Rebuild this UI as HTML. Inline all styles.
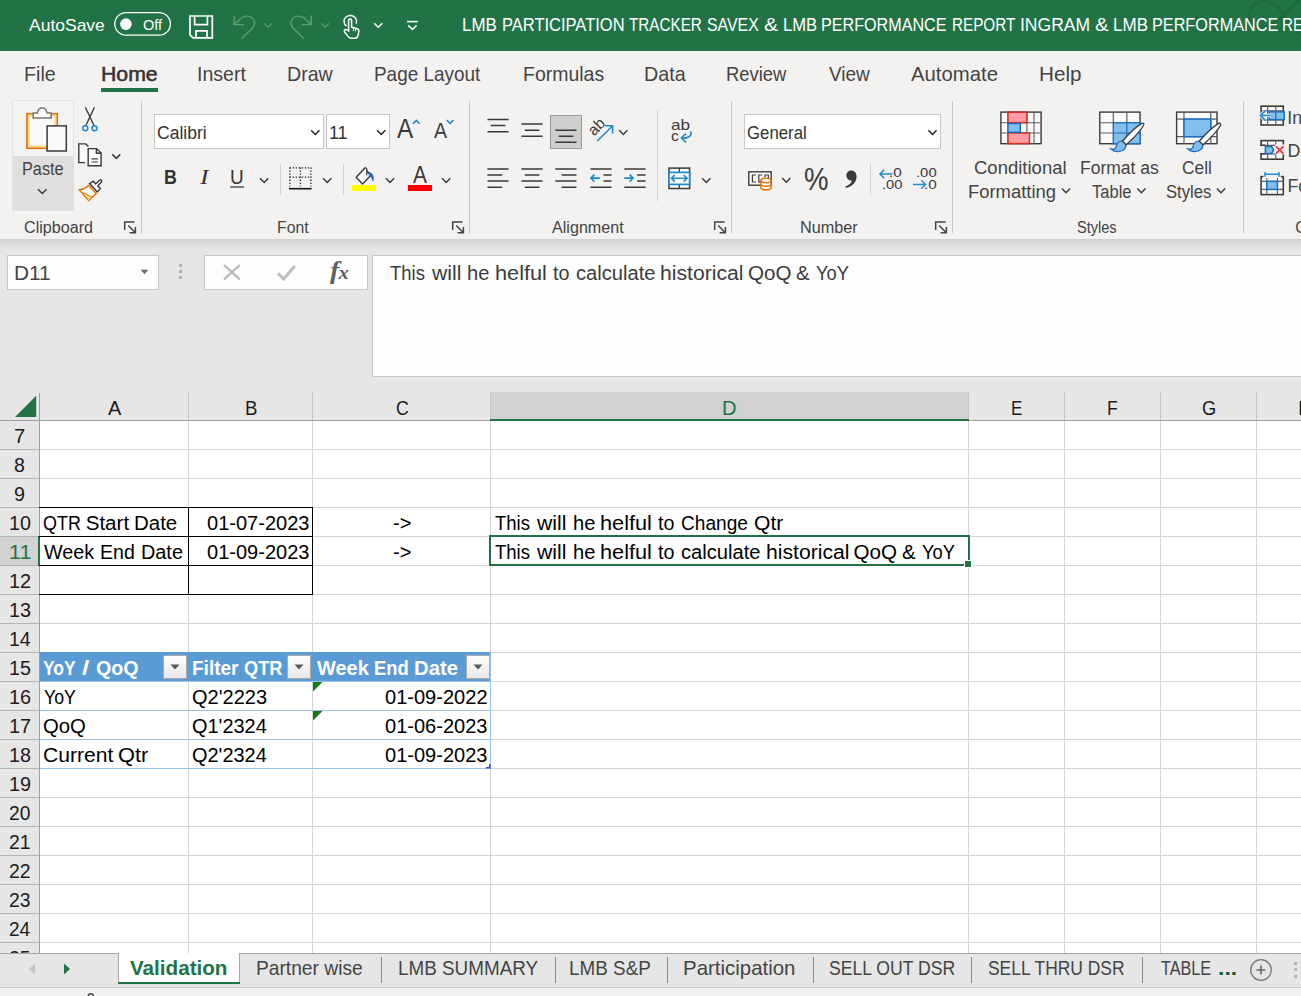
<!DOCTYPE html>
<html lang="en"><head><meta charset="utf-8"><title>Excel</title>
<style>
html,body{margin:0;padding:0;}
body{width:1301px;height:996px;overflow:hidden;position:relative;background:#fff;
font-family:"Liberation Sans",sans-serif;}
.r{position:absolute;box-sizing:border-box;display:block;}
.t{position:absolute;white-space:nowrap;transform-origin:0 0;display:block;}
#app{position:absolute;left:0;top:0;width:1301px;height:996px;overflow:hidden;}
</style></head><body><div id="app">
<div class="r " style="left:0px;top:0px;width:1301px;height:51px;background:#217346;"></div>
<div class="r " style="left:0px;top:51px;width:1301px;height:188px;background:#f3f2f1;"></div>
<div class="r " style="left:0px;top:239px;width:1301px;height:154px;background:#e6e6e6;"></div>
<div class="r " style="left:0px;top:239px;width:1301px;height:10px;background:linear-gradient(#d0d0d0,#dcdcdc 40%,#e6e6e6);"></div>
<svg class="r" style="left:1240px;top:0px;" width="61" height="51" viewBox="1240 0 61 51"><path d="M1301 -3 C1291 8 1283 16 1275.500 21.5 C1267 27.5 1255 28.500 1250 21 C1245.500 13.500 1252 2.500 1263 1.200 C1273 0.200 1279 7 1283.500 15 C1288 23.500 1294 31 1302 35.500" fill="none" stroke="#1d6a40" stroke-width="2.2"/></svg>
<span class="t" style="left:29.41px;top:13px;font-size:17.39px;line-height:24px;color:#fff;transform:scaleX(1.0065);">AutoSave</span>
<span class="t" style="left:142.65px;top:15px;font-size:14.49px;line-height:20px;color:#fff;transform:scaleX(1.0014);">Off</span>
<span class="t" style="left:462.40px;top:13px;font-size:17.83px;line-height:25px;color:#fff;transform:scaleX(0.9469);">LMB</span>
<span class="t" style="left:501.98px;top:13px;font-size:17.83px;line-height:25px;color:#fff;transform:scaleX(0.9256);">PARTICIPATION</span>
<span class="t" style="left:629.09px;top:13px;font-size:17.83px;line-height:25px;color:#fff;transform:scaleX(0.8556);">TRACKER</span>
<span class="t" style="left:706.79px;top:13px;font-size:17.83px;line-height:25px;color:#fff;transform:scaleX(0.8909);">SAVEX</span>
<span class="t" style="left:764.26px;top:13px;font-size:17.83px;line-height:25px;color:#fff;transform:scaleX(1.1855);">&amp;</span>
<span class="t" style="left:782.92px;top:13px;font-size:17.83px;line-height:25px;color:#fff;transform:scaleX(0.9323);">LMB</span>
<span class="t" style="left:821.21px;top:13px;font-size:17.83px;line-height:25px;color:#fff;transform:scaleX(0.9048);">PERFORMANCE</span>
<span class="t" style="left:951.68px;top:13px;font-size:17.83px;line-height:25px;color:#fff;transform:scaleX(0.8558);">REPORT</span>
<span class="t" style="left:1019.52px;top:13px;font-size:17.83px;line-height:25px;color:#fff;transform:scaleX(0.9824);">INGRAM</span>
<span class="t" style="left:1094.79px;top:13px;font-size:17.83px;line-height:25px;color:#fff;transform:scaleX(1.1399);">&amp;</span>
<span class="t" style="left:1112.64px;top:13px;font-size:17.83px;line-height:25px;color:#fff;transform:scaleX(0.9542);">LMB</span>
<span class="t" style="left:1151.70px;top:13px;font-size:17.83px;line-height:25px;color:#fff;transform:scaleX(0.9103);">PERFORMANCE</span>
<span class="t" style="left:1282.28px;top:13px;font-size:17.83px;line-height:25px;color:#fff;transform:scaleX(0.8558);">REPORT</span>
<svg class="r" style="left:0px;top:0px;" width="1301" height="51" viewBox="0 0 1301 51"><rect x="114.8" y="12.6" width="55.6" height="22.6" rx="11.3" fill="none" stroke="#fff" stroke-width="1.3"/><circle cx="125.9" cy="24.1" r="5.8" fill="#fff"/><path d="M190 16 H212.3 V37.8 H193 L190 34.8 Z M194.6 16 V24.6 H207.4 V16 M196 37.8 V30.8 H207 V37.8" fill="none" stroke="#fff" stroke-width="1.7" /><path d="M234.2 15.5 V24.6 H244 M234.6 24.2 L241.5 18 C244.5 15.5 250 15.3 252.8 18.6 C255.6 22 254.5 26 251.5 29 L241.8 38.6" fill="none" stroke="#5f9c79" stroke-width="1.4" /><path d="M311.3 15.5 V24.6 H301.5 M310.9 24.2 L304 18 C301 15.5 295.5 15.3 292.7 18.6 C289.9 22 291 26 294 29 L303.7 38.6" fill="none" stroke="#5f9c79" stroke-width="1.4" /><path d="M264.4 23.4 L268.2 27.2 L272 23.4" fill="none" stroke="#5f9c79" stroke-width="1.3" /><path d="M321.4 23.4 L325.2 27.2 L329 23.4" fill="none" stroke="#5f9c79" stroke-width="1.3" /><path d="M346.6 26.2 C343.6 24 343 19.6 346 17 C349 14.6 353.6 15.2 355.6 18.2 C356.6 19.8 356.8 21.6 356.2 23.4" fill="none" stroke="#fff" stroke-width="1.5" /><path d="M348.6 31 V20.6 C348.6 18.6 351.6 18.6 351.6 20.6 V27.2 L356.6 28.4 C358.4 28.8 359 30 358.8 31.6 L358 35.6 C357.6 37.4 356.4 38.2 354.8 38.2 H351.4 C350 38.2 349 37.6 348.2 36.6 L344.6 32 C343.4 30.4 345.4 28.6 347 30 Z" fill="none" stroke="#fff" stroke-width="1.5" /><path d="M353.4 28 V31 M355.6 28.6 V31.4" fill="none" stroke="#fff" stroke-width="1" /><path d="M374.3 23.2 L378.3 27.2 L382.3 23.2" fill="none" stroke="#fff" stroke-width="1.5" /><path d="M407 21.6 H417.8" fill="none" stroke="#fff" stroke-width="1.5" /><path d="M408.2 25.4 L412.4 29.4 L416.6 25.4" fill="none" stroke="#fff" stroke-width="1.5" /></svg>
<span class="t" style="left:24.17px;top:60px;font-size:20.14px;line-height:28px;color:#444444;transform:scaleX(0.9780);">File</span>
<span class="t" style="left:100.60px;top:60px;font-size:20.14px;line-height:28px;color:#333;transform:scaleX(1.0556);-webkit-text-stroke:0.55px #333;">Home</span>
<span class="t" style="left:196.99px;top:60px;font-size:20.14px;line-height:28px;color:#444444;transform:scaleX(0.9703);">Insert</span>
<span class="t" style="left:287.18px;top:60px;font-size:20.14px;line-height:28px;color:#444444;transform:scaleX(0.9743);">Draw</span>
<span class="t" style="left:374.23px;top:60px;font-size:20.14px;line-height:28px;color:#444444;transform:scaleX(0.9405);">Page Layout</span>
<span class="t" style="left:523.44px;top:60px;font-size:20.14px;line-height:28px;color:#444444;transform:scaleX(0.9673);">Formulas</span>
<span class="t" style="left:644.17px;top:60px;font-size:20.14px;line-height:28px;color:#444444;transform:scaleX(0.9784);">Data</span>
<span class="t" style="left:725.52px;top:60px;font-size:20.14px;line-height:28px;color:#444444;transform:scaleX(0.9155);">Review</span>
<span class="t" style="left:828.66px;top:60px;font-size:20.14px;line-height:28px;color:#444444;transform:scaleX(0.9433);">View</span>
<span class="t" style="left:911.40px;top:60px;font-size:20.14px;line-height:28px;color:#444444;transform:scaleX(1.0095);">Automate</span>
<span class="t" style="left:1038.85px;top:60px;font-size:20.14px;line-height:28px;color:#444444;transform:scaleX(1.0264);">Help</span>
<div class="r " style="left:101px;top:88px;width:57px;height:4px;background:#217346;"></div>
<div class="r " style="left:141px;top:101px;width:1px;height:132px;background:#c8c6c4;"></div>
<div class="r " style="left:469px;top:101px;width:1px;height:132px;background:#c8c6c4;"></div>
<div class="r " style="left:731px;top:101px;width:1px;height:132px;background:#c8c6c4;"></div>
<div class="r " style="left:952px;top:101px;width:1px;height:132px;background:#c8c6c4;"></div>
<div class="r " style="left:1243px;top:101px;width:1px;height:132px;background:#c8c6c4;"></div>
<div class="r " style="left:280px;top:164px;width:1px;height:31px;background:#d2d0ce;"></div>
<div class="r " style="left:343px;top:164px;width:1px;height:31px;background:#d2d0ce;"></div>
<div class="r " style="left:657px;top:110px;width:1px;height:91px;background:#d2d0ce;"></div>
<div class="r " style="left:870px;top:164px;width:1px;height:31px;background:#d2d0ce;"></div>
<div class="r " style="left:12px;top:100px;width:62px;height:111px;background:#f5f4f3;border:1px solid #e6e4e2;"></div>
<div class="r " style="left:12px;top:156px;width:62px;height:55px;background:#e1dfdd;"></div>
<span class="t" style="left:22.20px;top:157px;font-size:17.83px;line-height:25px;color:#444;transform:scaleX(0.9117);">Paste</span>
<span class="t" style="left:23.99px;top:217px;font-size:15.8px;line-height:22px;color:#444;transform:scaleX(1.0212);">Clipboard</span>
<span class="t" style="left:276.54px;top:217px;font-size:15.8px;line-height:22px;color:#444;transform:scaleX(0.9981);">Font</span>
<span class="t" style="left:552.42px;top:217px;font-size:15.8px;line-height:22px;color:#444;transform:scaleX(1.0204);">Alignment</span>
<span class="t" style="left:799.50px;top:217px;font-size:15.8px;line-height:22px;color:#444;transform:scaleX(1.0280);">Number</span>
<span class="t" style="left:1077.15px;top:217px;font-size:15.8px;line-height:22px;color:#444;transform:scaleX(0.9189);">Styles</span>
<span class="t" style="left:1295.21px;top:217px;font-size:15.8px;line-height:22px;color:#444;">Cells</span>
<div class="r " style="left:154px;top:114px;width:170px;height:35px;background:#fff;border:1px solid #c8c6c4;"></div>
<div class="r " style="left:326px;top:114px;width:64px;height:35px;background:#fff;border:1px solid #c8c6c4;"></div>
<div class="r " style="left:744px;top:114px;width:197px;height:35px;background:#fff;border:1px solid #c8c6c4;"></div>
<span class="t" style="left:156.82px;top:121px;font-size:17.83px;line-height:25px;color:#333;transform:scaleX(0.9833);">Calibri</span>
<span class="t" style="left:329.41px;top:121px;font-size:17.83px;line-height:25px;color:#333;transform:scaleX(1.0015);">11</span>
<span class="t" style="left:747.16px;top:121px;font-size:17.83px;line-height:25px;color:#333;transform:scaleX(0.9415);">General</span>
<span class="t" style="left:163.74px;top:163px;font-size:20.0px;line-height:28px;color:#333;font-weight:bold;transform:scaleX(0.8934);">B</span>
<span class="t" style="left:199.63px;top:163px;font-size:21.07px;line-height:29px;color:#333;font-style:italic;font-family:'Liberation Serif',serif;transform:scaleX(1.2277);">I</span>
<span class="t" style="left:230.48px;top:163px;font-size:20.0px;line-height:28px;color:#333;transform:scaleX(0.9474);">U</span>
<span class="t" style="left:974.47px;top:156px;font-size:17.83px;line-height:25px;color:#444;transform:scaleX(1.0379);">Conditional</span>
<span class="t" style="left:967.73px;top:180px;font-size:17.83px;line-height:25px;color:#444;transform:scaleX(1.0322);">Formatting</span>
<span class="t" style="left:1079.70px;top:156px;font-size:17.83px;line-height:25px;color:#444;transform:scaleX(0.9810);">Format as</span>
<span class="t" style="left:1091.87px;top:180px;font-size:17.83px;line-height:25px;color:#444;transform:scaleX(0.9263);">Table</span>
<span class="t" style="left:1182.13px;top:156px;font-size:17.83px;line-height:25px;color:#444;transform:scaleX(0.9714);">Cell</span>
<span class="t" style="left:1165.65px;top:180px;font-size:17.83px;line-height:25px;color:#444;transform:scaleX(0.9351);">Styles</span>
<span class="t" style="left:1287.30px;top:106px;font-size:17.83px;line-height:25px;color:#444;">Insert</span>
<span class="t" style="left:1287.47px;top:139px;font-size:17.83px;line-height:25px;color:#444;">Delete</span>
<span class="t" style="left:1287.47px;top:174px;font-size:17.83px;line-height:25px;color:#444;">Format</span>
<div class="r " style="left:550px;top:115px;width:32px;height:34px;background:#d0cecd;border:1px solid #9a9a9a;"></div>
<svg class="r" style="left:0px;top:98px;" width="141" height="120" viewBox="0 98 141 120"><rect x="27" y="113.8" width="30.2" height="34.4" fill="#fafafa" stroke="#e17000" stroke-width="1.7"/><rect x="28.9" y="115.7" width="26.4" height="30.6" fill="none" stroke="#f9d98c" stroke-width="1.9"/><path d="M33.2 118 V113 H37.4 C37.8 109.6 40 107.9 42.2 107.9 C44.4 107.9 46.6 109.6 47 113 H51.2 V118 Z" fill="#fafafa" stroke="#797775" stroke-width="1.5" /><rect x="47.1" y="125.9" width="19.2" height="25.1" fill="#fafafa" stroke="#3b3a39" stroke-width="1.5"/><path d="M38 189.2 L42.3 193.5 L46.6 189.2" fill="none" stroke="#3b3a39" stroke-width="1.5" /><path d="M85.4 107.4 L94.1 125.8 M94.4 107.4 L85.7 125.8" fill="none" stroke="#3b3a39" stroke-width="1.3" /><circle cx="85.3" cy="128.2" r="2.5" fill="none" stroke="#1e8bcd" stroke-width="1.5"/><circle cx="94.5" cy="128.2" r="2.5" fill="none" stroke="#1e8bcd" stroke-width="1.5"/><path d="M85 162.6 H78.8 V143.9 H85.8 L88.4 146.4" fill="#fafafa" stroke="#3b3a39" stroke-width="1.4" /><path d="M88.2 148.6 H96.6 L101.1 153.1 V165.8 H88.2 Z M96.4 148.8 V153.3 H100.9" fill="#fafafa" stroke="#3b3a39" stroke-width="1.4" /><path d="M91.6 158.9 H97.8 M91.6 162 H97.8" fill="none" stroke="#3b3a39" stroke-width="1.1" /><path d="M112.3 154.4 L116.3 158.4 L120.3 154.4" fill="none" stroke="#3b3a39" stroke-width="1.5" /><path d="M79.2 189.6 C83 189.2 86.4 187.6 88.6 185.4 L96.2 193.4 L88.6 200.6 Z" fill="#fff" stroke="#e17000" stroke-width="1.4" /><path d="M82 192.4 L92.4 197.2 L88.6 200.6 Z" fill="#fbdc9a" stroke="#e17000" stroke-width="1" /><path d="M89.6 183.6 L93.4 181.2 L95.6 184 L99.6 180.2 C100.8 179.2 102.4 180.8 101.4 182 L97.8 186 L100.4 188.4 L97.4 192 Z" fill="#fff" stroke="#3b3a39" stroke-width="1.4" /></svg>
<svg class="r" style="left:150px;top:108px;" width="330" height="100" viewBox="150 108 330 100"><path d="M311.2 130.20000000000002 L315.3 134.4 L319.40000000000003 130.20000000000002" fill="none" stroke="#222" stroke-width="1.5" /><path d="M377.09999999999997 130.20000000000002 L381.2 134.4 L385.3 130.20000000000002" fill="none" stroke="#222" stroke-width="1.5" /><path d="M412.9 123.8 L416.3 120.4 L419.7 123.8" fill="none" stroke="#1e8bcd" stroke-width="1.6" /><path d="M446.7 120 L450.1 123.4 L453.5 120" fill="none" stroke="#1e8bcd" stroke-width="1.6" /><path d="M260.09999999999997 178.20000000000002 L264.2 182.4 L268.3 178.20000000000002" fill="none" stroke="#3b3a39" stroke-width="1.5" /><path d="M323.09999999999997 178.20000000000002 L327.2 182.4 L331.3 178.20000000000002" fill="none" stroke="#3b3a39" stroke-width="1.5" /><path d="M385.9 178.20000000000002 L390 182.4 L394.1 178.20000000000002" fill="none" stroke="#3b3a39" stroke-width="1.5" /><path d="M442.09999999999997 178.20000000000002 L446.2 182.4 L450.3 178.20000000000002" fill="none" stroke="#3b3a39" stroke-width="1.5" /><path d="M230.3 187 H244" fill="none" stroke="#3b3a39" stroke-width="1.3" /><path d="M289.6 167.8 H311.2 M289.6 177.2 H311.2" fill="none" stroke="#222" stroke-width="1.3" stroke-dasharray="1.3 1.75"/><path d="M289.9 167.4 V186.6 M300.4 167.4 V186.6 M310.9 167.4 V186.6" fill="none" stroke="#222" stroke-width="1.3" stroke-dasharray="1.3 1.75"/><path d="M289 188.7 H311.6" fill="none" stroke="#111" stroke-width="1.6" /><path d="M364.2 168.8 L356.2 177.3 L362.6 183.9 L370.9 175.3 L366.8 171" fill="#f8f8f8" stroke="#3b3a39" stroke-width="1.4" /><path d="M363.9 169.6 C363.9 167.2 366.8 167.2 366.8 169.6 V175.2" fill="none" stroke="#3b3a39" stroke-width="1.3" /><path d="M369 172.2 C372.6 173 374.2 176.6 373 181.2 C372.2 178.4 371 176.6 369.2 175.4 Z" fill="#1e6fc0" stroke="#1565b0" stroke-width="0.6" /><rect x="352" y="185" width="24" height="6" fill="#ffff00"/><rect x="408" y="185" width="24" height="6" fill="#ff0000"/></svg>
<span class="t" style="left:397.48px;top:110px;font-size:27.54px;line-height:37px;color:#3b3a39;transform:scaleX(0.8803);">A</span>
<span class="t" style="left:434.00px;top:116px;font-size:21.74px;line-height:30px;color:#3b3a39;transform:scaleX(0.8991);">A</span>
<span class="t" style="left:413.20px;top:159px;font-size:23.19px;line-height:32px;color:#3b3a39;transform:scaleX(0.9016);">A</span>
<svg class="r" style="left:475px;top:108px;" width="260" height="100" viewBox="475 108 260 100"><path d="M487.4 119.4 H508.6 M490.8 125.5 H505.4 M487.4 131.7 H508.6 " fill="none" stroke="#3b3a39" stroke-width="1.5" /><path d="M521.4 124.1 H542.6 M524.8 130.2 H539.4 M521.4 136.2 H542.6 " fill="none" stroke="#3b3a39" stroke-width="1.5" /><path d="M555.3 130.2 H576.5 M558.7 136.2 H573.3 M555.3 142.3 H576.5 " fill="none" stroke="#3b3a39" stroke-width="1.5" /><path d="M487.4 169 H508.6 M487.4 175.1 H502.3 M487.4 181.1 H508.6 M487.4 187.2 H502.3 " fill="none" stroke="#3b3a39" stroke-width="1.5" /><path d="M521.4 169 H542.6 M524.8 175.1 H539.4 M521.4 181.1 H542.6 M524.8 187.2 H539.4 " fill="none" stroke="#3b3a39" stroke-width="1.5" /><path d="M555.3 169 H576.5 M561.6 175.1 H576.5 M555.3 181.1 H576.5 M561.6 187.2 H576.5 " fill="none" stroke="#3b3a39" stroke-width="1.5" /><path d="M590.4 169 H611.6 M603.5 175.1 H611.6 M603.5 181.1 H611.6 M590.4 187.2 H611.6 " fill="none" stroke="#3b3a39" stroke-width="1.5" /><path d="M624.3 169 H645.6 M637.1 175.1 H645.6 M637.1 181.1 H645.6 M624.3 187.2 H645.6 " fill="none" stroke="#3b3a39" stroke-width="1.5" /><path d="M599.8 178.1 H591 M594.4 174.6 L590.9 178.1 L594.4 181.6" fill="none" stroke="#1e8bcd" stroke-width="1.6" /><path d="M624.3 178.1 H633 M629.6 174.6 L633.1 178.1 L629.6 181.6" fill="none" stroke="#1e8bcd" stroke-width="1.6" /><path d="M597.2 141 L612.2 126.2 M605 125.8 H612.6 V133.4" fill="none" stroke="#1e8bcd" stroke-width="1.6" /><path d="M619.1999999999999 130.20000000000002 L623.3 134.4 L627.4 130.20000000000002" fill="none" stroke="#3b3a39" stroke-width="1.5" /><path d="M690.4 131.4 C692.6 135.4 689 138.6 682 138 M686 133.6 L681.4 138 L686 142.4" fill="none" stroke="#1e8bcd" stroke-width="1.6" /><rect x="669" y="168.1" width="20.6" height="20.4" fill="#fafafa" stroke="#3b3a39" stroke-width="1.5"/><path d="M679.3 168 V189" fill="none" stroke="#3b3a39" stroke-width="1.3" /><rect x="669" y="172.4" width="20.6" height="12" fill="#fafafa" stroke="#1e8bcd" stroke-width="1.7"/><path d="M671.6 178.3 H686.8 M674.8 175 L671.4 178.3 L674.8 181.6 M683.6 175 L687 178.3 L683.6 181.6" fill="none" stroke="#1e8bcd" stroke-width="1.6" /><path d="M702.1999999999999 178.20000000000002 L706.3 182.4 L710.4 178.20000000000002" fill="none" stroke="#3b3a39" stroke-width="1.5" /></svg>
<svg class="r" style="left:580px;top:110px;" width="40" height="36" viewBox="0 0 40 36"><text transform="translate(14.0 26.4) rotate(-45)" font-family="Liberation Sans, sans-serif" font-size="15.5" fill="#3b3a39">ab</text></svg>
<span class="t" style="left:670.83px;top:115px;font-size:14.4px;line-height:20px;color:#3b3a39;transform:scaleX(1.1924);">ab</span>
<span class="t" style="left:670.89px;top:126px;font-size:14.4px;line-height:20px;color:#3b3a39;transform:scaleX(1.0982);">c</span>
<svg class="r" style="left:0px;top:108px;" width="1301" height="131" viewBox="0 108 1301 131"><path d="M928.4 130.20000000000002 L932.5 134.4 L936.6 130.20000000000002" fill="none" stroke="#222" stroke-width="1.5" /><rect x="748.8" y="171.8" width="22.4" height="13.4" fill="#fafafa" stroke="#3b3a39" stroke-width="1.4"/><path d="M756 175 H752.4 V182 H756 M762.4 175 H758.8 V182 H762.4 M765 177.4 V175 H768.4 V178" fill="none" stroke="#3b3a39" stroke-width="1.2" /><path d="M760.9 180.6 V187.4 C760.9 190.6 771.1 190.6 771.1 187.4 V180.6" fill="#fff" stroke="#e17000" stroke-width="1.4" /><ellipse cx="766" cy="180.4" rx="5.1" ry="2.3" fill="#fff" stroke="#e17000" stroke-width="1.4"/><path d="M760.9 184 C760.9 187 771.1 187 771.1 184" fill="none" stroke="#e17000" stroke-width="1.3" /><path d="M782.1999999999999 178.1 L786.3 182.29999999999998 L790.4 178.1" fill="none" stroke="#3b3a39" stroke-width="1.5" /><path d="M851.2 170.4 C854.4 170.4 856.6 172.8 856.6 176.4 C856.6 181.8 852.8 186.2 846 188 L845.4 186.4 C849.4 184.8 851.6 182.6 851.8 180.4 C849 181 846.4 179 846.4 175.6 C846.4 172.6 848.4 170.4 851.2 170.4 Z" fill="#3b3a39" stroke="none" stroke-width="0" /><path d="M892.4 174 H880 M884.2 169.8 L879.9 174 L884.2 178.2" fill="none" stroke="#1e8bcd" stroke-width="1.5" /><path d="M913 184.5 H925.4 M921.2 180.3 L925.5 184.5 L921.2 188.7" fill="none" stroke="#1e8bcd" stroke-width="1.5" /><path d="M124.7 229.9 V222.0 H134.6 M128.2 225.5 L135.2 232.5 M129.6 232.70000000000002 H135.4 V226.9" fill="none" stroke="#444" stroke-width="1.5" /><path d="M452.7 229.9 V222.0 H462.6 M456.2 225.5 L463.2 232.5 M457.6 232.70000000000002 H463.4 V226.9" fill="none" stroke="#444" stroke-width="1.5" /><path d="M714.7 229.9 V222.0 H724.6 M718.2 225.5 L725.2 232.5 M719.6 232.70000000000002 H725.4 V226.9" fill="none" stroke="#444" stroke-width="1.5" /><path d="M935.7 229.9 V222.0 H945.6 M939.2 225.5 L946.2 232.5 M940.6 232.70000000000002 H946.4 V226.9" fill="none" stroke="#444" stroke-width="1.5" /></svg>
<span class="t" style="left:803.64px;top:159px;font-size:30.72px;line-height:41px;color:#3b3a39;transform:scaleX(0.8972);">%</span>
<span class="t" style="left:889.22px;top:163px;font-size:13.33px;line-height:19px;color:#3b3a39;transform:scaleX(1.1492);">.0</span>
<span class="t" style="left:881.58px;top:175px;font-size:13.33px;line-height:19px;color:#3b3a39;transform:scaleX(1.1015);">.00</span>
<span class="t" style="left:915.76px;top:163px;font-size:13.33px;line-height:19px;color:#3b3a39;transform:scaleX(1.1134);">.00</span>
<span class="t" style="left:923.62px;top:175px;font-size:13.33px;line-height:19px;color:#3b3a39;transform:scaleX(1.1492);">.0</span>
<svg class="r" style="left:960px;top:100px;" width="341" height="110" viewBox="960 100 341 110"><rect x="1000.9" y="112.1" width="40.2" height="31.6" fill="#fafafa" stroke="#3b3a39" stroke-width="1.4"/><path d="M1001 122.75 H1041 M1001 133 H1041 M1008 112 V144 M1026.9 112 V144 M1034 112 V144" fill="none" stroke="#605e5c" stroke-width="1.1" /><rect x="1008" y="112.2" width="18.9" height="10.5" fill="#ff9ba3" stroke="#d92c20" stroke-width="1.5"/><rect x="1008" y="133" width="21.5" height="10.6" fill="#ff9ba3" stroke="#d92c20" stroke-width="1.5"/><rect x="1008" y="123.5" width="12.3" height="8.8" fill="#83beec" stroke="#1a6fc4" stroke-width="1.5"/><path d="M1061.9 188.6 L1066 192.79999999999998 L1070.1 188.6" fill="none" stroke="#3b3a39" stroke-width="1.5" /><rect x="1099.8" y="112.1" width="40.2" height="31.6" fill="#fafafa" stroke="#3b3a39" stroke-width="1.4"/><rect x="1113.3" y="122.75" width="26.8" height="21" fill="#83beec" stroke="#1a6fc4" stroke-width="1.4"/><path d="M1100 122.75 H1113 M1100 133 H1113 M1113.3 112 V122.7 M1126.8 112 V122.7" fill="none" stroke="#605e5c" stroke-width="1.2" /><path d="M1113.3 133 H1140 M1126.8 122.75 V144" fill="none" stroke="#1a6fc4" stroke-width="1.2" /><path d="M1123.1999999999998 140.8 C1119.0 140.6 1116.6 143.6 1116.1999999999998 146.6 C1115.8 148.8 1113.6 149.6 1111.0 149.0 C1114.0 152.0 1120.1999999999998 152.6 1124.0 149.6 C1126.8 147.2 1126.3999999999999 143.2 1123.1999999999998 140.8 Z" fill="#83beec" stroke="#1a6fc4" stroke-width="1.3" /><path d="M1122.3999999999999 141.2 C1130.6 131.8 1137.6 125.8 1141.8 123.4 C1143.3999999999999 122.60000000000001 1144.3999999999999 123.60000000000001 1143.6 125.2 C1141.1999999999998 129.6 1135.1999999999998 136.6 1126.1999999999998 144.8 Z" fill="#fff" stroke="#3b3a39" stroke-width="1.3" /><path d="M1137.3000000000002 188.6 L1141.4 192.79999999999998 L1145.5 188.6" fill="none" stroke="#3b3a39" stroke-width="1.5" /><rect x="1176.6" y="112.1" width="40.4" height="31.6" fill="#fafafa" stroke="#3b3a39" stroke-width="1.4"/><path d="M1177 119.1 H1217 M1177 136.7 H1217 M1184 112 V144 M1210.8 112 V144" fill="none" stroke="#605e5c" stroke-width="1.2" /><rect x="1184" y="119.1" width="26.8" height="17.6" fill="#83beec" stroke="#1a6fc4" stroke-width="1.5"/><path d="M1200.1 140.8 C1195.9 140.6 1193.5 143.6 1193.1 146.6 C1192.7 148.8 1190.5 149.6 1187.9 149.0 C1190.9 152.0 1197.1 152.6 1200.9 149.6 C1203.7 147.2 1203.3 143.2 1200.1 140.8 Z" fill="#83beec" stroke="#1a6fc4" stroke-width="1.3" /><path d="M1199.3 141.2 C1207.5 131.8 1214.5 125.8 1218.7 123.4 C1220.3 122.60000000000001 1221.3 123.60000000000001 1220.5 125.2 C1218.1 129.6 1212.1 136.6 1203.1 144.8 Z" fill="#fff" stroke="#3b3a39" stroke-width="1.3" /><path d="M1216.9 188.6 L1221 192.79999999999998 L1225.1 188.6" fill="none" stroke="#3b3a39" stroke-width="1.5" /><rect x="1261.1" y="106.2" width="22.2" height="18.8" fill="#fafafa" stroke="#3b3a39" stroke-width="1.6"/><path d="M1267.6 106.2 V125.0 M1275.8 106.2 V125.0 M1261.1 110.8 H1283.3 M1261.1 120 H1283.3 " fill="none" stroke="#605e5c" stroke-width="1.15" /><rect x="1269.2" y="111.8" width="15" height="7.9" fill="#83beec" stroke="#1a6fc4" stroke-width="1.5"/><path d="M1275.8 111.8 V119.7" fill="none" stroke="#1a6fc4" stroke-width="1.2" /><path d="M1271 115.5 H1260.8 M1265.6 110.4 L1260.5 115.5 L1265.6 120.6" fill="none" stroke="#f3f2f1" stroke-width="3.6" /><path d="M1271 115.5 H1260.8 M1265.6 110.4 L1260.5 115.5 L1265.6 120.6" fill="none" stroke="#1e8bcd" stroke-width="1.7" /><rect x="1261.1" y="140.6" width="22.2" height="18.6" fill="#fafafa" stroke="#3b3a39" stroke-width="1.6"/><path d="M1267.6 140.6 V159.2 M1275.8 140.6 V159.2 M1261.1 145.3 H1283.3 M1261.1 153.8 H1283.3 " fill="none" stroke="#605e5c" stroke-width="1.15" /><rect x="1259.5" y="146.1" width="25.5" height="6.9" fill="#f3f2f1"/><rect x="1274.600" y="144" width="10" height="11" rx="3" fill="#f3f2f1"/><path d="M1265.4 146.6 H1271.6 L1273.6 150 L1271.6 153.400 H1265.4 Z" fill="#83beec" stroke="#1a6fc4" stroke-width="1.5" /><path d="M1260.400 145.300 H1265 M1260.400 153.800 H1265" fill="none" stroke="#3b3a39" stroke-width="1.4" /><path d="M1276 146.4 L1283.4 153.6 M1283.4 146.4 L1276 153.6" fill="none" stroke="#e8373d" stroke-width="1.8" /><rect x="1261.1" y="176.6" width="22.2" height="18" fill="#fafafa" stroke="#3b3a39" stroke-width="1.6"/><path d="M1266.8 176.6 V194.6 M1277.4 176.6 V194.6 M1261.1 181.4 H1283.3 M1261.1 189.4 H1283.3 " fill="none" stroke="#605e5c" stroke-width="1.15" /><rect x="1263.400" y="171" width="17.400" height="7" fill="#f3f2f1"/><rect x="1266.8" y="181.4" width="10.6" height="8" fill="#83beec" stroke="#1a6fc4" stroke-width="1.5"/><path d="M1264.6 174.3 H1279.4 M1265 171.9 V176.8 M1279 171.9 V176.8" fill="none" stroke="#1e8bcd" stroke-width="1.5" /></svg>
<div class="r " style="left:7px;top:255px;width:152px;height:35px;background:#fdfdfd;border:1px solid #c6c6c6;"></div>
<div class="r " style="left:204px;top:255px;width:164px;height:35px;background:#fdfdfd;border:1px solid #c6c6c6;"></div>
<div class="r " style="left:372px;top:255px;width:935px;height:122px;background:#fdfdfd;border:1px solid #c6c6c6;"></div>
<span class="t" style="left:13.63px;top:260px;font-size:19.93px;line-height:27px;color:#444;transform:scaleX(1.0466);">D11</span>
<span class="t" style="left:389.63px;top:259px;font-size:20.58px;line-height:28px;color:#3c3c3c;transform:scaleX(0.9003);">This</span>
<span class="t" style="left:431.60px;top:259px;font-size:20.58px;line-height:28px;color:#3c3c3c;transform:scaleX(1.0307);">will</span>
<span class="t" style="left:467.19px;top:259px;font-size:20.58px;line-height:28px;color:#3c3c3c;transform:scaleX(0.9767);">he</span>
<span class="t" style="left:495.08px;top:259px;font-size:20.58px;line-height:28px;color:#3c3c3c;transform:scaleX(1.0559);">helful</span>
<span class="t" style="left:552.90px;top:259px;font-size:20.58px;line-height:28px;color:#3c3c3c;transform:scaleX(0.9594);">to</span>
<span class="t" style="left:575.69px;top:259px;font-size:20.58px;line-height:28px;color:#3c3c3c;transform:scaleX(0.9781);">calculate</span>
<span class="t" style="left:660.12px;top:259px;font-size:20.58px;line-height:28px;color:#3c3c3c;transform:scaleX(1.0279);">historical</span>
<span class="t" style="left:748.07px;top:259px;font-size:20.58px;line-height:28px;color:#3c3c3c;">QoQ</span>
<span class="t" style="left:796.28px;top:259px;font-size:20.58px;line-height:28px;color:#3c3c3c;transform:scaleX(0.9955);">&amp;</span>
<span class="t" style="left:816.14px;top:259px;font-size:20.58px;line-height:28px;color:#3c3c3c;transform:scaleX(0.8885);">YoY</span>
<span class="t" style="left:329.8px;top:254px;font-size:24.5px;line-height:33px;color:#5f5f5f;font-weight:bold;font-style:italic;font-family:'Liberation Serif',serif;transform:scaleX(1.1311);">f<span style="font-size:18px;position:relative;left:-0.6px;">x</span></span>
<svg class="r" style="left:130px;top:250px;" width="250" height="45" viewBox="130 250 250 45"><path d="M140.6 269.8 H148.4 L144.5 274.2 Z" fill="#6a6a6a"/><rect x="179" y="264" width="3.2" height="3" fill="#b4b4b4"/><rect x="179" y="270" width="3.2" height="3" fill="#b4b4b4"/><rect x="179" y="276" width="3.2" height="3" fill="#b4b4b4"/><path d="M224 265 L239.8 279.4 M239.8 265 L224 279.4" fill="none" stroke="#b9b9b9" stroke-width="2.2" /><path d="M278 273.4 L283.6 279 L294.8 266" fill="none" stroke="#c0c0c0" stroke-width="3.2" /></svg>
<div class="r " style="left:0px;top:393px;width:1301px;height:560px;background:#fff;"></div>
<div class="r " style="left:0px;top:393px;width:1301px;height:28px;background:#e6e6e6;"></div>
<div class="r " style="left:0px;top:393px;width:40px;height:560px;background:#e6e6e6;"></div>
<div class="r " style="left:490px;top:392px;width:478px;height:29px;background:#d2d2d2;"></div>
<div class="r " style="left:0px;top:536px;width:39px;height:29px;background:#d2d2d2;"></div>
<div class="r " style="left:39px;top:449px;width:1262px;height:1px;background:#d4d4d4;"></div>
<div class="r " style="left:0px;top:449px;width:39px;height:1px;background:#b4b4b4;"></div>
<div class="r " style="left:39px;top:478px;width:1262px;height:1px;background:#d4d4d4;"></div>
<div class="r " style="left:0px;top:478px;width:39px;height:1px;background:#b4b4b4;"></div>
<div class="r " style="left:39px;top:507px;width:1262px;height:1px;background:#d4d4d4;"></div>
<div class="r " style="left:0px;top:507px;width:39px;height:1px;background:#b4b4b4;"></div>
<div class="r " style="left:39px;top:536px;width:1262px;height:1px;background:#d4d4d4;"></div>
<div class="r " style="left:0px;top:536px;width:39px;height:1px;background:#b4b4b4;"></div>
<div class="r " style="left:39px;top:565px;width:1262px;height:1px;background:#d4d4d4;"></div>
<div class="r " style="left:0px;top:565px;width:39px;height:1px;background:#b4b4b4;"></div>
<div class="r " style="left:39px;top:594px;width:1262px;height:1px;background:#d4d4d4;"></div>
<div class="r " style="left:0px;top:594px;width:39px;height:1px;background:#b4b4b4;"></div>
<div class="r " style="left:39px;top:623px;width:1262px;height:1px;background:#d4d4d4;"></div>
<div class="r " style="left:0px;top:623px;width:39px;height:1px;background:#b4b4b4;"></div>
<div class="r " style="left:39px;top:652px;width:1262px;height:1px;background:#d4d4d4;"></div>
<div class="r " style="left:0px;top:652px;width:39px;height:1px;background:#b4b4b4;"></div>
<div class="r " style="left:39px;top:681px;width:1262px;height:1px;background:#d4d4d4;"></div>
<div class="r " style="left:0px;top:681px;width:39px;height:1px;background:#b4b4b4;"></div>
<div class="r " style="left:39px;top:710px;width:1262px;height:1px;background:#d4d4d4;"></div>
<div class="r " style="left:0px;top:710px;width:39px;height:1px;background:#b4b4b4;"></div>
<div class="r " style="left:39px;top:739px;width:1262px;height:1px;background:#d4d4d4;"></div>
<div class="r " style="left:0px;top:739px;width:39px;height:1px;background:#b4b4b4;"></div>
<div class="r " style="left:39px;top:768px;width:1262px;height:1px;background:#d4d4d4;"></div>
<div class="r " style="left:0px;top:768px;width:39px;height:1px;background:#b4b4b4;"></div>
<div class="r " style="left:39px;top:797px;width:1262px;height:1px;background:#d4d4d4;"></div>
<div class="r " style="left:0px;top:797px;width:39px;height:1px;background:#b4b4b4;"></div>
<div class="r " style="left:39px;top:826px;width:1262px;height:1px;background:#d4d4d4;"></div>
<div class="r " style="left:0px;top:826px;width:39px;height:1px;background:#b4b4b4;"></div>
<div class="r " style="left:39px;top:855px;width:1262px;height:1px;background:#d4d4d4;"></div>
<div class="r " style="left:0px;top:855px;width:39px;height:1px;background:#b4b4b4;"></div>
<div class="r " style="left:39px;top:884px;width:1262px;height:1px;background:#d4d4d4;"></div>
<div class="r " style="left:0px;top:884px;width:39px;height:1px;background:#b4b4b4;"></div>
<div class="r " style="left:39px;top:913px;width:1262px;height:1px;background:#d4d4d4;"></div>
<div class="r " style="left:0px;top:913px;width:39px;height:1px;background:#b4b4b4;"></div>
<div class="r " style="left:39px;top:942px;width:1262px;height:1px;background:#d4d4d4;"></div>
<div class="r " style="left:0px;top:942px;width:39px;height:1px;background:#b4b4b4;"></div>
<div class="r " style="left:188px;top:421px;width:1px;height:532px;background:#d4d4d4;"></div>
<div class="r " style="left:188px;top:392px;width:1px;height:28px;background:#c6c6c6;"></div>
<div class="r " style="left:312px;top:421px;width:1px;height:532px;background:#d4d4d4;"></div>
<div class="r " style="left:312px;top:392px;width:1px;height:28px;background:#c6c6c6;"></div>
<div class="r " style="left:490px;top:421px;width:1px;height:532px;background:#d4d4d4;"></div>
<div class="r " style="left:490px;top:392px;width:1px;height:28px;background:#c6c6c6;"></div>
<div class="r " style="left:968px;top:421px;width:1px;height:532px;background:#d4d4d4;"></div>
<div class="r " style="left:968px;top:392px;width:1px;height:28px;background:#c6c6c6;"></div>
<div class="r " style="left:1064px;top:421px;width:1px;height:532px;background:#d4d4d4;"></div>
<div class="r " style="left:1064px;top:392px;width:1px;height:28px;background:#c6c6c6;"></div>
<div class="r " style="left:1160px;top:421px;width:1px;height:532px;background:#d4d4d4;"></div>
<div class="r " style="left:1160px;top:392px;width:1px;height:28px;background:#c6c6c6;"></div>
<div class="r " style="left:1256px;top:421px;width:1px;height:532px;background:#d4d4d4;"></div>
<div class="r " style="left:1256px;top:392px;width:1px;height:28px;background:#c6c6c6;"></div>
<div class="r " style="left:1352px;top:421px;width:1px;height:532px;background:#d4d4d4;"></div>
<div class="r " style="left:1352px;top:392px;width:1px;height:28px;background:#c6c6c6;"></div>
<div class="r " style="left:0px;top:420px;width:1301px;height:1px;background:#9f9f9f;"></div>
<div class="r " style="left:39px;top:393px;width:1px;height:560px;background:#9f9f9f;"></div>
<div class="r " style="left:490px;top:419px;width:479px;height:2px;background:#217346;"></div>
<div class="r " style="left:38px;top:536px;width:2px;height:30px;background:#217346;"></div>
<svg class="r" style="left:14px;top:395px;" width="24" height="24" viewBox="0 0 24 24"><path d="M22.2 0.8 L22.2 22 L1 22 Z" fill="#217346"/></svg>
<span class="t" style="left:107.90px;top:394px;font-size:20.0px;line-height:28px;color:#1c1c1c;">A</span>
<span class="t" style="left:244.60px;top:394px;font-size:20.0px;line-height:28px;color:#1c1c1c;transform:scaleX(0.9346);">B</span>
<span class="t" style="left:395.61px;top:394px;font-size:20.0px;line-height:28px;color:#1c1c1c;transform:scaleX(0.8889);">C</span>
<span class="t" style="left:722.49px;top:394px;font-size:20.0px;line-height:28px;color:#217346;transform:scaleX(1.0084);">D</span>
<span class="t" style="left:1011.08px;top:394px;font-size:20.0px;line-height:28px;color:#1c1c1c;transform:scaleX(0.8532);">E</span>
<span class="t" style="left:1107.40px;top:394px;font-size:20.0px;line-height:28px;color:#1c1c1c;transform:scaleX(0.8776);">F</span>
<span class="t" style="left:1202.18px;top:394px;font-size:20.0px;line-height:28px;color:#1c1c1c;transform:scaleX(0.9160);">G</span>
<span class="t" style="left:1297.71px;top:394px;font-size:20.0px;line-height:28px;color:#1c1c1c;transform:scaleX(1.0268);">H</span>
<span class="t" style="left:13.99px;top:422px;font-size:20.0px;line-height:28px;color:#1c1c1c;transform:scaleX(1.0110);">7</span>
<span class="t" style="left:14.12px;top:451px;font-size:20.0px;line-height:28px;color:#1c1c1c;transform:scaleX(0.9787);">8</span>
<span class="t" style="left:14.11px;top:480px;font-size:20.0px;line-height:28px;color:#1c1c1c;transform:scaleX(0.9892);">9</span>
<span class="t" style="left:8.92px;top:509px;font-size:20.0px;line-height:28px;color:#1c1c1c;transform:scaleX(0.9849);">10</span>
<span class="t" style="left:8.78px;top:538px;font-size:20.0px;line-height:28px;color:#217346;transform:scaleX(1.0769);">11</span>
<span class="t" style="left:8.91px;top:567px;font-size:20.0px;line-height:28px;color:#1c1c1c;transform:scaleX(0.9949);">12</span>
<span class="t" style="left:8.92px;top:596px;font-size:20.0px;line-height:28px;color:#1c1c1c;transform:scaleX(0.9899);">13</span>
<span class="t" style="left:8.94px;top:625px;font-size:20.0px;line-height:28px;color:#1c1c1c;transform:scaleX(0.9751);">14</span>
<span class="t" style="left:8.92px;top:654px;font-size:20.0px;line-height:28px;color:#1c1c1c;transform:scaleX(0.9849);">15</span>
<span class="t" style="left:8.92px;top:683px;font-size:20.0px;line-height:28px;color:#1c1c1c;transform:scaleX(0.9899);">16</span>
<span class="t" style="left:8.91px;top:712px;font-size:20.0px;line-height:28px;color:#1c1c1c;transform:scaleX(0.9949);">17</span>
<span class="t" style="left:8.92px;top:741px;font-size:20.0px;line-height:28px;color:#1c1c1c;transform:scaleX(0.9849);">18</span>
<span class="t" style="left:8.92px;top:770px;font-size:20.0px;line-height:28px;color:#1c1c1c;transform:scaleX(0.9899);">19</span>
<span class="t" style="left:9.44px;top:799px;font-size:20.0px;line-height:28px;color:#1c1c1c;transform:scaleX(0.9608);">20</span>
<span class="t" style="left:9.43px;top:828px;font-size:20.0px;line-height:28px;color:#1c1c1c;transform:scaleX(0.9703);">21</span>
<span class="t" style="left:9.43px;top:857px;font-size:20.0px;line-height:28px;color:#1c1c1c;transform:scaleX(0.9703);">22</span>
<span class="t" style="left:9.43px;top:886px;font-size:20.0px;line-height:28px;color:#1c1c1c;transform:scaleX(0.9655);">23</span>
<span class="t" style="left:9.45px;top:915px;font-size:20.0px;line-height:28px;color:#1c1c1c;transform:scaleX(0.9515);">24</span>
<span class="t" style="left:9.44px;top:944px;font-size:20.0px;line-height:28px;color:#1c1c1c;transform:scaleX(0.9608);">25</span>
<div class="r " style="left:40px;top:652px;width:451px;height:29px;background:#5b9bd5;"></div>
<div class="r " style="left:40px;top:681px;width:451px;height:1px;background:#9bc2e6;"></div>
<div class="r " style="left:40px;top:710px;width:451px;height:1px;background:#9bc2e6;"></div>
<div class="r " style="left:40px;top:739px;width:451px;height:1px;background:#9bc2e6;"></div>
<div class="r " style="left:40px;top:768px;width:451px;height:1px;background:#9bc2e6;"></div>
<div class="r " style="left:490px;top:652px;width:1px;height:116px;background:#9bc2e6;"></div>
<span class="t" style="left:43.25px;top:654px;font-size:20.58px;line-height:28px;color:#fff;font-weight:bold;transform:scaleX(0.8474);">YoY</span>
<span class="t" style="left:82.34px;top:654px;font-size:20.58px;line-height:28px;color:#fff;font-weight:bold;transform:scaleX(1.2708);">/</span>
<span class="t" style="left:95.61px;top:654px;font-size:20.58px;line-height:28px;color:#fff;font-weight:bold;transform:scaleX(0.9578);">QoQ</span>
<span class="t" style="left:191.76px;top:654px;font-size:20.58px;line-height:28px;color:#fff;font-weight:bold;transform:scaleX(0.9246);">Filter</span>
<span class="t" style="left:244.27px;top:654px;font-size:20.58px;line-height:28px;color:#fff;font-weight:bold;transform:scaleX(0.8865);">QTR</span>
<span class="t" style="left:316.60px;top:654px;font-size:20.58px;line-height:28px;color:#fff;font-weight:bold;transform:scaleX(0.9699);">Week</span>
<span class="t" style="left:374.11px;top:654px;font-size:20.58px;line-height:28px;color:#fff;font-weight:bold;transform:scaleX(0.8918);">End</span>
<span class="t" style="left:414.28px;top:654px;font-size:20.58px;line-height:28px;color:#fff;font-weight:bold;transform:scaleX(0.9883);">Date</span>
<div class="r " style="left:163.2px;top:655px;width:24px;height:24px;border:1px solid #ababab;background:linear-gradient(#fdfdfd,#e9e9e9);"></div>
<svg class="r" style="left:170.2px;top:664px;" width="10" height="6" viewBox="0 0 10 6"><path d="M0.5 0.5 L9.5 0.5 L5 5.5 Z" fill="#595959"/></svg>
<div class="r " style="left:287.2px;top:655px;width:24px;height:24px;border:1px solid #ababab;background:linear-gradient(#fdfdfd,#e9e9e9);"></div>
<svg class="r" style="left:294.2px;top:664px;" width="10" height="6" viewBox="0 0 10 6"><path d="M0.5 0.5 L9.5 0.5 L5 5.5 Z" fill="#595959"/></svg>
<div class="r " style="left:465.5px;top:655px;width:24px;height:24px;border:1px solid #ababab;background:linear-gradient(#fdfdfd,#e9e9e9);"></div>
<svg class="r" style="left:472.5px;top:664px;" width="10" height="6" viewBox="0 0 10 6"><path d="M0.5 0.5 L9.5 0.5 L5 5.5 Z" fill="#595959"/></svg>
<span class="t" style="left:43.09px;top:509px;font-size:20.58px;line-height:28px;color:#000;transform:scaleX(0.8708);">QTR</span>
<span class="t" style="left:85.67px;top:509px;font-size:20.58px;line-height:28px;color:#000;">Start</span>
<span class="t" style="left:134.16px;top:509px;font-size:20.58px;line-height:28px;color:#000;transform:scaleX(0.9938);">Date</span>
<span class="t" style="left:43.80px;top:538px;font-size:20.58px;line-height:28px;color:#000;transform:scaleX(0.9603);">Week</span>
<span class="t" style="left:99.73px;top:538px;font-size:20.58px;line-height:28px;color:#000;transform:scaleX(0.9510);">End</span>
<span class="t" style="left:140.91px;top:538px;font-size:20.58px;line-height:28px;color:#000;transform:scaleX(0.9645);">Date</span>
<span class="t" style="left:206.70px;top:509px;font-size:20.58px;line-height:28px;color:#000;transform:scaleX(0.9733);">01-07-2023</span>
<span class="t" style="left:206.70px;top:538px;font-size:20.58px;line-height:28px;color:#000;transform:scaleX(0.9733);">01-09-2023</span>
<span class="t" style="left:392.69px;top:509px;font-size:20.58px;line-height:28px;color:#000;transform:scaleX(0.9777);">-&gt;</span>
<span class="t" style="left:392.69px;top:538px;font-size:20.58px;line-height:28px;color:#000;transform:scaleX(0.9777);">-&gt;</span>
<span class="t" style="left:495.03px;top:509px;font-size:20.58px;line-height:28px;color:#000;transform:scaleX(0.9003);">This</span>
<span class="t" style="left:537.00px;top:509px;font-size:20.58px;line-height:28px;color:#000;transform:scaleX(1.0307);">will</span>
<span class="t" style="left:572.59px;top:509px;font-size:20.58px;line-height:28px;color:#000;transform:scaleX(0.9767);">he</span>
<span class="t" style="left:600.48px;top:509px;font-size:20.58px;line-height:28px;color:#000;transform:scaleX(1.0559);">helful</span>
<span class="t" style="left:658.30px;top:509px;font-size:20.58px;line-height:28px;color:#000;transform:scaleX(0.9594);">to</span>
<span class="t" style="left:681.05px;top:509px;font-size:20.58px;line-height:28px;color:#000;transform:scaleX(0.9276);">Change</span>
<span class="t" style="left:754.05px;top:509px;font-size:20.58px;line-height:28px;color:#000;transform:scaleX(1.0268);">Qtr</span>
<span class="t" style="left:495.03px;top:538px;font-size:20.58px;line-height:28px;color:#000;transform:scaleX(0.9003);">This</span>
<span class="t" style="left:537.00px;top:538px;font-size:20.58px;line-height:28px;color:#000;transform:scaleX(1.0307);">will</span>
<span class="t" style="left:572.59px;top:538px;font-size:20.58px;line-height:28px;color:#000;transform:scaleX(0.9767);">he</span>
<span class="t" style="left:600.48px;top:538px;font-size:20.58px;line-height:28px;color:#000;transform:scaleX(1.0559);">helful</span>
<span class="t" style="left:658.30px;top:538px;font-size:20.58px;line-height:28px;color:#000;transform:scaleX(0.9594);">to</span>
<span class="t" style="left:681.09px;top:538px;font-size:20.58px;line-height:28px;color:#000;transform:scaleX(0.9781);">calculate</span>
<span class="t" style="left:765.52px;top:538px;font-size:20.58px;line-height:28px;color:#000;transform:scaleX(1.0279);">historical</span>
<span class="t" style="left:853.47px;top:538px;font-size:20.58px;line-height:28px;color:#000;">QoQ</span>
<span class="t" style="left:901.68px;top:538px;font-size:20.58px;line-height:28px;color:#000;transform:scaleX(0.9955);">&amp;</span>
<span class="t" style="left:921.54px;top:538px;font-size:20.58px;line-height:28px;color:#000;transform:scaleX(0.8885);">YoY</span>
<span class="t" style="left:43.56px;top:683px;font-size:20.58px;line-height:28px;color:#000;transform:scaleX(0.8608);">YoY</span>
<span class="t" style="left:43.09px;top:712px;font-size:20.58px;line-height:28px;color:#000;transform:scaleX(0.9863);">QoQ</span>
<span class="t" style="left:42.85px;top:741px;font-size:20.58px;line-height:28px;color:#000;transform:scaleX(1.0252);">Current</span>
<span class="t" style="left:117.62px;top:741px;font-size:20.58px;line-height:28px;color:#000;transform:scaleX(1.0598);">Qtr</span>
<span class="t" style="left:192.10px;top:683px;font-size:20.58px;line-height:28px;color:#000;transform:scaleX(0.9725);">Q2'2223</span>
<span class="t" style="left:192.10px;top:712px;font-size:20.58px;line-height:28px;color:#000;transform:scaleX(0.9685);">Q1'2324</span>
<span class="t" style="left:192.10px;top:741px;font-size:20.58px;line-height:28px;color:#000;transform:scaleX(0.9685);">Q2'2324</span>
<span class="t" style="left:384.70px;top:683px;font-size:20.58px;line-height:28px;color:#000;transform:scaleX(0.9742);">01-09-2022</span>
<span class="t" style="left:384.70px;top:712px;font-size:20.58px;line-height:28px;color:#000;transform:scaleX(0.9733);">01-06-2023</span>
<span class="t" style="left:384.70px;top:741px;font-size:20.58px;line-height:28px;color:#000;transform:scaleX(0.9733);">01-09-2023</span>
<div class="r " style="left:39px;top:507px;width:274px;height:1px;background:#000;"></div>
<div class="r " style="left:39px;top:536px;width:274px;height:1px;background:#000;"></div>
<div class="r " style="left:39px;top:565px;width:274px;height:1px;background:#000;"></div>
<div class="r " style="left:39px;top:594px;width:274px;height:1px;background:#000;"></div>
<div class="r " style="left:188px;top:507px;width:1px;height:88px;background:#000;"></div>
<div class="r " style="left:312px;top:507px;width:1px;height:88px;background:#000;"></div>
<div class="r " style="left:489px;top:535px;width:481px;height:31px;border:2px solid #217346;"></div>
<div class="r " style="left:964px;top:560px;width:8px;height:8px;background:#217346;border:1px solid #fff;"></div>
<svg class="r" style="left:313px;top:682px;" width="10" height="10" viewBox="0 0 10 10"><path d="M0 0 L9.5 0 L0 9.5 Z" fill="#107c10"/></svg>
<svg class="r" style="left:313px;top:711px;" width="10" height="10" viewBox="0 0 10 10"><path d="M0 0 L9.5 0 L0 9.5 Z" fill="#107c10"/></svg>
<svg class="r" style="left:486px;top:764px;" width="5" height="5" viewBox="0 0 5 5"><path d="M4.5 0 L4.5 4.5 L0 4.5 L0 3 L3 3 L3 0 Z" fill="#3f48cc"/></svg>
<div class="r " style="left:0px;top:953px;width:1301px;height:34px;background:#e6e6e6;"></div>
<div class="r " style="left:0px;top:953px;width:1301px;height:1px;background:#a6a6a6;"></div>
<div class="r " style="left:0px;top:987px;width:1301px;height:1px;background:#c8c8c8;"></div>
<div class="r " style="left:0px;top:988px;width:1301px;height:8px;background:#f3f2f1;"></div>
<svg class="r" style="left:86px;top:992px;" width="10" height="4" viewBox="0 0 10 4"><circle cx="4.8" cy="4.4" r="2.6" fill="none" stroke="#444" stroke-width="1.4"/></svg>
<div class="r " style="left:118px;top:953px;width:122px;height:31px;background:#fff;border-left:1px solid #a6a6a6;border-right:1px solid #a6a6a6;"></div>
<div class="r " style="left:118px;top:982px;width:122px;height:2px;background:#217346;"></div>
<span class="t" style="left:130.29px;top:954px;font-size:20.14px;line-height:28px;color:#217346;font-weight:bold;transform:scaleX(1.0251);">Validation</span>
<span class="t" style="left:255.96px;top:954px;font-size:20.14px;line-height:28px;color:#444;transform:scaleX(0.9537);">Partner wise</span>
<span class="t" style="left:397.69px;top:954px;font-size:20.14px;line-height:28px;color:#444;transform:scaleX(0.9375);">LMB SUMMARY</span>
<span class="t" style="left:568.99px;top:954px;font-size:20.14px;line-height:28px;color:#444;transform:scaleX(0.9387);">LMB S&amp;P</span>
<span class="t" style="left:683.36px;top:954px;font-size:20.14px;line-height:28px;color:#444;transform:scaleX(1.0153);">Participation</span>
<span class="t" style="left:828.71px;top:954px;font-size:20.14px;line-height:28px;color:#444;transform:scaleX(0.8751);">SELL OUT DSR</span>
<span class="t" style="left:987.92px;top:954px;font-size:20.14px;line-height:28px;color:#444;transform:scaleX(0.8655);">SELL THRU DSR</span>
<span class="t" style="left:1161.48px;top:954px;font-size:20.14px;line-height:28px;color:#444;transform:scaleX(0.8062);">TABLE</span>
<span class="t" style="left:1218.09px;top:954px;font-size:20.14px;line-height:28px;color:#0f5c2e;font-weight:bold;transform:scaleX(1.1431);">...</span>
<div class="r " style="left:381px;top:957px;width:1px;height:26px;background:#8a8a8a;"></div>
<div class="r " style="left:555px;top:957px;width:1px;height:26px;background:#8a8a8a;"></div>
<div class="r " style="left:667px;top:957px;width:1px;height:26px;background:#8a8a8a;"></div>
<div class="r " style="left:813px;top:957px;width:1px;height:26px;background:#8a8a8a;"></div>
<div class="r " style="left:971px;top:957px;width:1px;height:26px;background:#8a8a8a;"></div>
<div class="r " style="left:1142px;top:957px;width:1px;height:26px;background:#8a8a8a;"></div>
<svg class="r" style="left:1249px;top:958px;" width="24" height="24" viewBox="0 0 24 24"><circle cx="12" cy="12" r="10.3" fill="none" stroke="#777" stroke-width="1.3"/><path d="M12 7.5 V16.5 M7.5 12 H16.5" stroke="#666" stroke-width="1.6"/></svg>
<div class="r " style="left:1294px;top:961.5px;width:3px;height:3px;background:#b5b5b5;"></div>
<div class="r " style="left:1294px;top:968px;width:3px;height:3px;background:#b5b5b5;"></div>
<div class="r " style="left:1294px;top:974.5px;width:3px;height:3px;background:#b5b5b5;"></div>
<svg class="r" style="left:28px;top:963px;" width="8" height="12" viewBox="0 0 8 12"><path d="M7 0.5 L1 6 L7 11.5 Z" fill="#c6c6c6"/></svg>
<svg class="r" style="left:63px;top:963px;" width="8" height="12" viewBox="0 0 8 12"><path d="M1 0.5 L7 6 L1 11.5 Z" fill="#217346"/></svg>
</div></body></html>
